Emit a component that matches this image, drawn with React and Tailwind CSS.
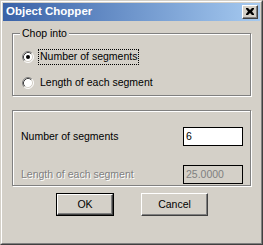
import React from "react";

const font = { fontFamily: '"Liberation Sans", Arial, sans-serif' };

const Radio = ({ checked }) => (
  <svg width="12" height="12" viewBox="0 0 12 12" className="shrink-0">
    <circle cx="6" cy="6" r="5" fill="#fff" />
    <path d="M2.11 9.89 A5.5 5.5 0 0 1 9.89 2.11" fill="none" stroke="#808080" />
    <path d="M9.89 2.11 A5.5 5.5 0 0 1 2.11 9.89" fill="none" stroke="#fff" />
    <path d="M2.82 9.18 A4.5 4.5 0 0 1 9.18 2.82" fill="none" stroke="#404040" />
    <path d="M9.18 2.82 A4.5 4.5 0 0 1 2.82 9.18" fill="none" stroke="#d4d0c8" />
    {checked && <circle cx="6" cy="6" r="2" fill="#000" />}
  </svg>
);

const Button = ({ children, def, width }) => (
  <div className={`h-[23px] ${width} ${def ? "border border-black" : ""}`}>
    <div className="h-full w-full border border-t-white border-l-white border-r-[#404040] border-b-[#404040] shadow-[inset_-1px_-1px_0_#808080] flex items-center justify-center text-[10.5px] text-black">
      {children}
    </div>
  </div>
);

export default function App() {
  return (
    <div
      className="w-[263px] h-[245px] bg-[#d4d0c8] border border-t-[#d4d0c8] border-l-[#d4d0c8] border-r-[#404040] border-b-[#404040]"
      style={font}
    >
      <div className="h-full w-full border border-t-white border-l-white border-r-[#808080] border-b-[#808080] p-px flex flex-col">
        {/* title bar */}
        <div className="h-[18px] shrink-0 flex items-center justify-between bg-gradient-to-r from-[#3a62a7] to-[#a6caf0] pl-[3px] pr-[2px]">
          <span className="text-white font-bold text-[11.5px] leading-none">Object Chopper</span>
          <div className="w-[16px] h-[14px] bg-[#d4d0c8] border border-t-white border-l-white border-r-[#404040] border-b-[#404040] shadow-[inset_-1px_-1px_0_#808080] flex items-center justify-center">
            <svg width="8" height="7" viewBox="0 0 8 7" className="mb-px">
              <path d="M0 0h2l2 2 2-2h2v1L6 3.5 8 6v1H6L4 5 2 7H0V6l2-2.5L0 1z" fill="#000" />
            </svg>
          </div>
        </div>

        <div className="px-[9px] pt-[12px] flex flex-col text-[10.5px]">
          {/* Chop into */}
          <div className="relative h-[63px] border border-[#808080] shadow-[inset_1px_1px_0_#fff,1px_1px_0_#fff] pl-[9px] pt-[15px] flex flex-col">
            <span className="absolute -top-[7px] left-[7px] bg-[#d4d0c8] px-[2px] leading-[13px] text-black">
              Chop into
            </span>
            <div className="h-[16px] flex items-center">
              <Radio checked />
              <span className="ml-[4px] h-[16px] px-px border border-dotted border-black flex items-center text-black">
                Number of segments
              </span>
            </div>
            <div className="h-[16px] mt-[10px] flex items-center">
              <Radio />
              <span className="ml-[6px] text-black">Length of each segment</span>
            </div>
          </div>

          {/* values */}
          <div className="mt-[14px] h-[76px] border border-[#808080] shadow-[inset_1px_1px_0_#fff,1px_1px_0_#fff] pl-[8px] pr-[7px] pt-[16px] flex flex-col">
            <div className="flex items-center justify-between">
              <span className="text-black">Number of segments</span>
              <div className="w-[60px] h-[19px] bg-white border border-black flex items-center pl-[2px] text-black">
                6
              </div>
            </div>
            <div className="mt-[19px] flex items-center justify-between">
              <span className="text-[#808080] [text-shadow:1px_1px_0_#fff]">Length of each segment</span>
              <div className="w-[60px] h-[19px] border border-black flex items-center pl-[2px] text-[#808080]">
                25.0000
              </div>
            </div>
          </div>
        </div>

        {/* buttons */}
        <div className="mt-[7px] pl-[53px] flex gap-[27px]">
          <Button def width="w-[58px]">OK</Button>
          <Button width="w-[67px]">Cancel</Button>
        </div>
      </div>
    </div>
  );
}
